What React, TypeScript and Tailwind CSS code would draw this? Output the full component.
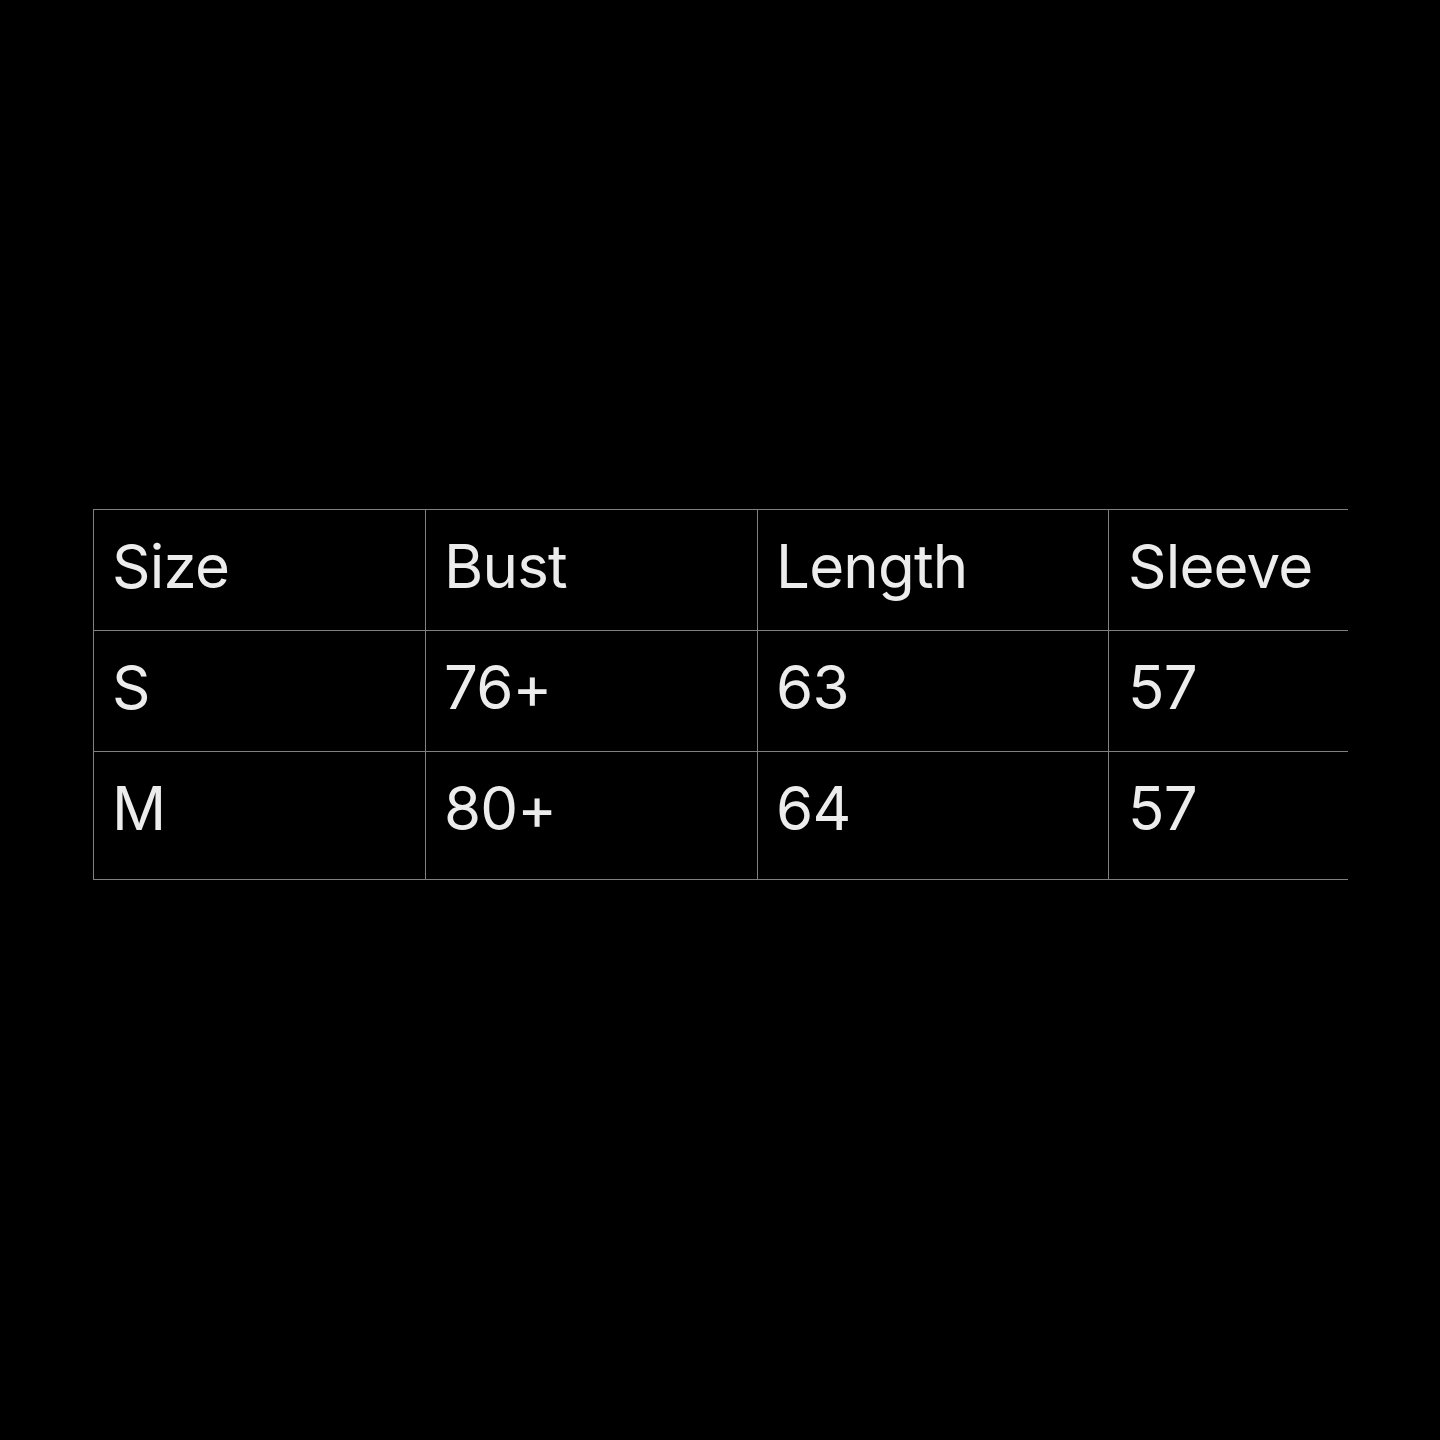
const rows = [
  ['Size', 'Bust', 'Length', 'Sleeve'],
  ['S', '76+', '63', '57'],
  ['M', '80+', '64', '57'],
]

export default function App() {
  return (
    <div className="h-[1440px] w-[1440px] bg-black pl-[93px] pt-[509px] font-['Inter',sans-serif] text-[#ececec]">
      <div className="grid w-[1255px] grid-cols-[332px_332px_351px_240px] border-b border-[#808080]">
        {rows.map((row, i) =>
          row.map((cell, j) => (
            <div
              key={`${i}-${j}`}
              className={`border-l border-t border-[#808080] pt-[26px] text-[60px] leading-none tracking-[-0.8px] ${
                i === 2 ? 'h-[128px]' : 'h-[121px]'
              } ${j === 3 ? 'pl-[19px]' : 'pl-[18px]'}`}
            >
              {cell}
            </div>
          ))
        )}
      </div>
    </div>
  )
}
